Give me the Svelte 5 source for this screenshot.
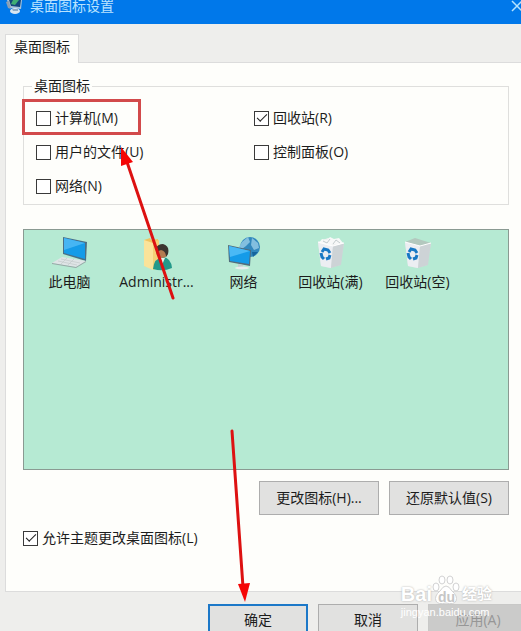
<script lang="ts">
  let items = $state([
    { label: '计算机(M)', checked: false },
    { label: '回收站(R)', checked: true },
    { label: '用户的文件(U)', checked: false },
    { label: '控制面板(O)', checked: false },
    { label: '网络(N)', checked: false },
  ]);
  let allowThemes = $state(true);

  const icons = [
    { kind: 'computer', label: '此电脑' },
    { kind: 'user', label: 'Administr...' },
    { kind: 'network', label: '网络' },
    { kind: 'full', label: '回收站(满)' },
    { kind: 'empty', label: '回收站(空)' },
  ];
</script>

<main class="dialog">
  <header class="titlebar">
    <svg class="title-icon" width="18" height="14" viewBox="0 0 18 14" aria-hidden="true">
      <path d="M1 0H16L15 9 4 8Z" fill="#a9c4dc" />
      <path d="M3 0H15L14 7 5 6Z" fill="#14467c" />
      <path d="M7 0H13L9 5 5 4Z" fill="#3fae74" />
      <path d="M0 2 3 1 5 9 2 8Z" fill="#8c9fb4" />
      <ellipse cx="9" cy="11" rx="5" ry="3" fill="#d9e6f0" />
      <path d="M6 9 12 9 12 11 7 11Z" fill="#8eabc5" />
    </svg>
    <span class="title">桌面图标设置</span>
    <button class="close" aria-label="关闭">
      <svg width="12" height="12" viewBox="0 0 12 12"><path d="M1 1 11 11M11 1 1 11" stroke="#b5e3ff" stroke-width="1.5" /></svg>
    </button>
  </header>

  <div class="tabs" role="tablist">
    <button class="tab" role="tab" aria-selected="true">桌面图标</button>
  </div>

  <section class="panel">
    <fieldset>
      <legend>桌面图标</legend>
      <div class="options">
        {#each items as item}
          <label class="check">
            <input type="checkbox" bind:checked={item.checked} />
            <span>{item.label}</span>
          </label>
        {/each}
      </div>
    </fieldset>

    <div class="preview">
      {#each icons as icon}
        <div class="icon">
          <svg width="36" height="36" viewBox="0 0 36 36" aria-hidden="true">
            {#if icon.kind === 'computer'}
              <path d="M11 1 35 6 34 25 11 18Z" fill="#4b6f86" />
              <path d="M12 2 33 7 33 23 12 17Z" fill="#159be8" />
              <path d="M12 2 33 7 12 14Z" fill="#46b5f3" />
              <path d="M10 21 34 25 24 31 0 27Z" fill="#dfe4e6" />
              <path d="M0 27 24 31 34 25 34 26 24 32 0 28Z" fill="#98a6a6" />
              <path d="M9 23 28 27M6 25 25 29M15 22 9 28M22 23 16 29" stroke="#c3caca" stroke-width="0.7" />
            {:else if icon.kind === 'user'}
              <path d="M5 4 11 2 12 4 19 3 19 32 5 30Z" fill="#efc462" />
              <path d="M5 4 14 7 14 34 5 30Z" fill="#fbe39a" />
              <path d="M14 6 20 4 20 31 14 34Z" fill="#f4d177" />
              <path d="M14 33Q15 22 24 21Q32 22 33 32Q24 36 14 33Z" fill="#24998a" />
              <path d="M20 22 26 22 23 29Z" fill="#e4f4ea" />
              <circle cx="23" cy="16" r="6" fill="#b47b51" />
              <path d="M17 12Q19 8 24 8Q31 10 29 18L27 21Q27 15 22 14L17 16Z" fill="#3c3530" />
            {:else if icon.kind === 'network'}
              <circle cx="24" cy="11" r="10" fill="#3288bd" />
              <path d="M16 6 22 1 24 6 20 10 16 13 13 11ZM26 2 32 7 33 12 28 14 25 9Z" fill="#83bfdf" />
              <path d="M26 16 32 16 27 21Z" fill="#15659d" />
              <path d="M2 9 25 14 24 30 3 26Z" fill="#536c7b" />
              <path d="M3 10 24 15 23 28 4 25Z" fill="#159be8" />
              <path d="M3 10 24 15 4 21Z" fill="#4ab9f5" />
              <path d="M12 28 17 29 17 32 12 31Z" fill="#c1cbce" />
              <ellipse cx="16" cy="32" rx="7" ry="1.5" fill="#e9eeee" />
            {:else}
              <path d="M5 6 31 7 27 29 17 32 8 30Z" fill="#dfe3e5" />
              <path d="M5 6 20 10 18 32 8 30Z" fill="#eceef2" />
              <path d="M20 10 31 7 28 29 18 32Z" fill="#cdd3d6" />
              <path d="M5 6 15 2 31 7 20 10Z" fill={icon.kind === 'full' ? '#eef0f0' : '#b3c8be'} />
              {#if icon.kind === 'full'}
                <path d="M6 7 9 3 14 4 17 1 21 3 26 2 30 7 25 9 20 8 16 10 10 8Z" fill="#f7f8f8" />
                <path d="M10 5 14 7 17 3M20 8 23 4 27 7" fill="none" stroke="#c4ccce" />
              {/if}
              <path d="M5 6 20 10 31 7" fill="none" stroke="#fff" />
              <path d="M9 16 11 13 15 14 17 17" fill="none" stroke="#1878c4" stroke-width="3" />
              <path d="M17 19 16 22 13 23M8 17 9 21 11 23" fill="none" stroke="#1878c4" stroke-width="3" />
            {/if}
          </svg>
          <span>{icon.label}</span>
        </div>
      {/each}
    </div>

    <div class="actions">
      <button class="btn">更改图标(H)...</button>
      <button class="btn">还原默认值(S)</button>
    </div>

    <label class="check theme">
      <input type="checkbox" bind:checked={allowThemes} />
      <span>允许主题更改桌面图标(L)</span>
    </label>
  </section>

  <footer>
    <button class="btn ok">确定</button>
    <button class="btn">取消</button>
    <button class="btn apply" disabled>应用(A)</button>
  </footer>

  <div class="watermark">
    <div class="brand">
      <span>Bai</span>
      <span class="paw">
        <svg width="28" height="30" viewBox="0 0 28 30" aria-hidden="true">
          <g fill="#fff" stroke="#d2d2d2">
            <ellipse cx="4" cy="12" rx="3" ry="4" />
            <ellipse cx="10" cy="5" rx="3" ry="4" />
            <ellipse cx="18" cy="5" rx="3" ry="4" />
            <ellipse cx="24" cy="12" rx="3" ry="4" />
            <path d="M14 11Q17 11 20 16Q26 21 24 26Q22 30 14 28Q6 30 4 26Q2 21 8 16Q11 11 14 11Z" />
          </g>
        </svg>
        <b>du</b>
      </span>
      <span class="cn">经验</span>
    </div>
    <div class="site">jingyan.baidu.com</div>
  </div>

  <svg class="marks" width="521" height="631" viewBox="0 0 521 631" aria-hidden="true">
    <rect x="23.5" y="100.5" width="116" height="33" fill="none" stroke="#d24a4b" stroke-width="3" />
    <g stroke="#dd1111" stroke-width="3" stroke-linecap="round">
      <path d="M173 298 127 162" />
      <path d="M232 431 243 587" />
    </g>
    <path d="M121 147 133 162 121 166Z" fill="#f50505" />
    <path d="M245 602 238 584 250 583Z" fill="#f50505" />
  </svg>
</main>

<style>
  :global(body) {
    margin: 0;
  }

  .dialog {
    position: relative;
    height: 100vh;
    overflow: hidden;
    background: #eeeeec;
    color: #1c1c1c;
    font-family: 'Open Sans', 'Noto Sans CJK SC', sans-serif;
    font-size: 14px;
    line-height: 20px;
  }

  button {
    font: inherit;
    color: inherit;
  }

  .titlebar {
    display: flex;
    align-items: flex-start;
    height: 24px;
    padding-left: 6px;
    background: #0078ea;
    color: #b9e3ff;
    line-height: 12px;
  }

  .title {
    flex: 1;
    margin-left: 6px;
  }

  .close {
    display: flex;
    margin-right: -2px;
    padding: 0;
    border: 0;
    background: none;
  }

  .tabs {
    display: flex;
    padding: 10px 0 0 5px;
  }

  .tab {
    position: relative;
    z-index: 1;
    height: 29px;
    margin-bottom: -1px;
    padding: 0 8px 4px;
    border: 1px solid #dcdcdc;
    border-bottom: 0;
    background: #fefefb;
  }

  .panel {
    margin-left: 5px;
    padding: 13px 12px 36px 17px;
    border: 1px solid #dcdcdc;
    border-right: 0;
    background: #fefefb;
  }

  fieldset {
    min-width: 0;
    margin: 0;
    padding: 5px 0 1px 12px;
    border: 1px solid #dfdfdd;
  }

  legend {
    margin-left: -4px;
    padding: 0 2px;
  }

  .options {
    display: grid;
    grid-template-columns: 218px 1fr;
  }

  .check {
    display: flex;
    align-items: center;
    gap: 4px;
    height: 34px;
  }

  .check input {
    display: flex;
    align-items: center;
    justify-content: center;
    width: 15px;
    height: 15px;
    margin: 0;
    appearance: none;
    border: 1px solid #3a3a3a;
    background: #fff;
  }

  .check input:checked::after {
    content: '';
    width: 9px;
    height: 4px;
    margin-top: -4px;
    border-left: 1px solid #222;
    border-bottom: 1px solid #222;
    transform: rotate(-45deg);
  }

  .preview {
    display: flex;
    height: 233px;
    margin-top: 24px;
    padding: 6px 0 0 2px;
    border: 1px solid #8a9a92;
    background: #b6ead3;
  }

  .icon {
    display: flex;
    flex-direction: column;
    align-items: center;
    width: 87px;
  }

  .actions {
    display: flex;
    justify-content: flex-end;
    gap: 10px;
    margin-top: 11px;
  }

  .btn {
    box-sizing: border-box;
    width: 120px;
    height: 34px;
    padding: 0;
    border: 1px solid #adadad;
    background: #e1e1e0;
  }

  .theme {
    margin-top: 6px;
  }

  footer {
    display: flex;
    justify-content: flex-end;
    gap: 10px;
    margin-right: -7px;
    padding-top: 12px;
  }

  footer .btn {
    width: 100px;
    padding-bottom: 2px;
  }

  .btn.ok {
    border: 2px solid #1c78c8;
  }

  .btn.apply {
    border-color: #c8c8c7;
    background: #cbcbca;
    color: #969696;
  }

  .watermark {
    position: absolute;
    right: 29px;
    bottom: 12px;
    color: #fff;
    text-shadow: 0 0 2px #aaa;
    pointer-events: none;
  }

  .brand {
    display: flex;
    align-items: flex-end;
    font: bold 20px/22px 'Liberation Sans', 'Noto Sans CJK SC', sans-serif;
  }

  .paw {
    position: relative;
    height: 30px;
  }

  .paw b {
    position: absolute;
    left: 6px;
    bottom: 0;
    color: #c6c6c6;
    font-size: 14px;
    line-height: 16px;
    text-shadow: none;
  }

  .cn {
    margin-left: 2px;
    font-size: 15px;
  }

  .site {
    font: 11px/14px 'Liberation Sans', sans-serif;
    text-shadow: none;
  }

  .marks {
    position: absolute;
    top: 0;
    left: 0;
    pointer-events: none;
  }
</style>
